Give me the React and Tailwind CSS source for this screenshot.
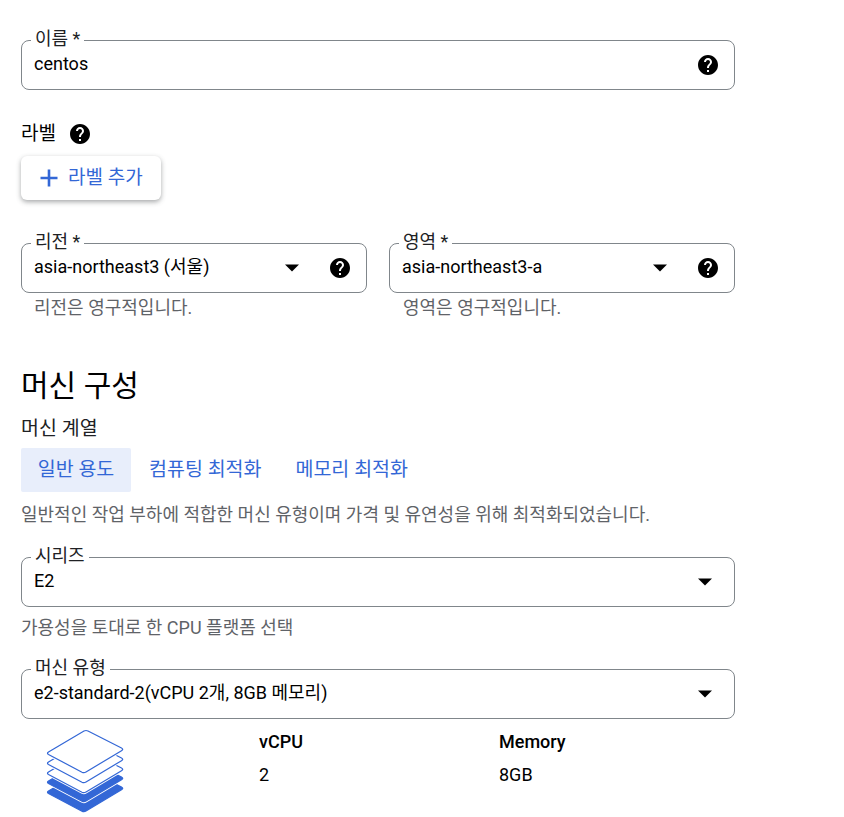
function HelpIcon({ className = '' }) {
  return (
    <svg viewBox="0 0 24 24" className={`w-6 h-6 shrink-0 fill-black ${className}`}>
      <path d="M12 2C6.48 2 2 6.48 2 12s4.48 10 10 10 10-4.48 10-10S17.52 2 12 2zm1 17h-2v-2h2v2zm2.07-7.75l-.9.92C13.45 12.9 13 13.5 13 15h-2v-.5c0-1.1.45-2.1 1.17-2.83l1.24-1.26c.37-.36.59-.86.59-1.41 0-1.1-.9-2-2-2s-2 .9-2 2H8c0-2.21 1.79-4 4-4s4 1.79 4 4c0 .88-.36 1.68-.93 2.25z" />
    </svg>
  )
}

function Caret() {
  return (
    <svg viewBox="0 0 24 24" className="w-6 h-6 shrink-0 fill-black">
      <path d="M5 8.5l7 7 7-7z" />
    </svg>
  )
}

function Field({ label, value, select, help, className = '' }) {
  return (
    <div className={`relative h-[50px] rounded-[8px] border border-[#80868b] flex items-center pl-3 ${help ? 'pr-[14px]' : 'pr-[17px]'} ${className}`}>
      <span className="absolute -top-[14px] left-[9px] bg-white px-1 text-[18px] leading-[24px] text-[#202124]">{label}</span>
      <span className="flex-1 text-[18px] leading-[24px] text-black -mt-[2px]">{value}</span>
      {select && <Caret />}
      {help && <HelpIcon className={select ? 'ml-[24px]' : ''} />}
    </div>
  )
}

const layerPath = 'M38 2 Q40 1 42 2 L75.5 19 Q78 20.3 75.5 21.7 L40 43 Q38 44.2 36 43.2 L2.5 25.5 Q0.5 24.3 2.5 23 Z'

function Layers() {
  const layers = [
    { y: 39, filled: true },
    { y: 29, filled: true },
    { y: 20 },
    { y: 10 },
    { y: 0 },
  ]
  return (
    <svg viewBox="0 0 85 85" className="w-[85px] h-[85px] ml-[25px] mt-[10px] shrink-0">
      {layers.map(({ y, filled }) => (
        <g key={y} transform={`translate(0 ${y})`}>
          <path d={layerPath} fill="#fff" stroke="#fff" strokeWidth="3" />
          <path d={layerPath} fill={filled ? '#3367d6' : '#fff'} stroke="#3367d6" strokeWidth="1.2" />
        </g>
      ))}
    </svg>
  )
}

export default function App() {
  return (
    <div
      className="w-[844px] h-[817px] overflow-hidden bg-white pl-[21px] pt-[40px]"
      style={{ fontFamily: 'Roboto, "Noto Sans CJK KR", sans-serif' }}
    >
      <div className="w-[714px]">
        <Field label="이름 *" value="centos" help />

        <div className="mt-[32px] flex items-center gap-[12px] h-[24px] text-[19px] text-black">
          <span>라벨</span>
          <HelpIcon />
        </div>

        <button className="mt-[10px] w-[140px] h-[44px] flex items-center pl-[16px] gap-[7px] rounded-[6px] bg-white shadow-[0_2px_5px_rgba(60,64,67,0.45)] text-[#3367d6] text-[19px]">
          <svg viewBox="0 0 24 24" className="w-6 h-6 fill-[#3367d6]">
            <path d="M20.5 13.3h-7.2v7.2h-2.6v-7.2H3.500v-2.600h7.200V3.500h2.600v7.200h7.200z" />
          </svg>
          라벨 추가
        </button>

        <div className="mt-[43px] grid grid-cols-2 gap-[22px]">
          <div>
            <Field label="리전 *" value="asia-northeast3 (서울)" select help />
            <p className="mt-[5px] pl-[13px] text-[18px] leading-[20px] text-[#5f6368]">리전은 영구적입니다.</p>
          </div>
          <div>
            <Field label="영역 *" value="asia-northeast3-a" select help />
            <p className="mt-[5px] pl-[14px] text-[18px] leading-[20px] text-[#5f6368]">영역은 영구적입니다.</p>
          </div>
        </div>

        <h2 className="mt-[50px] text-[30px] leading-[36px] font-normal text-black">머신 구성</h2>
        <p className="mt-[13px] text-[19.5px] leading-[24px] text-[#202124]">머신 계열</p>

        <div className="mt-[7px] flex text-[#3367d6] text-[19.500px] leading-[44px]">
          <span className="w-[110px] h-[44px] text-center rounded-[2px] bg-[#e8eefb]">일반 용도</span>
          <span className="pl-[18px] pr-[17px]">컴퓨팅 최적화</span>
          <span className="pl-[17px]">메모리 최적화</span>
        </div>

        <p className="mt-[13px] text-[18px] leading-[20px] text-[#5f6368]">일반적인 작업 부하에 적합한 머신 유형이며 가격 및 유연성을 위해 최적화되었습니다.</p>

        <Field label="시리즈" value="E2" select className="mt-[32px]" />
        <p className="mt-[11px] text-[18px] leading-[20px] text-[#5f6368]">가용성을 토대로 한 CPU 플랫폼 선택</p>

        <Field label="머신 유형" value="e2-standard-2(vCPU 2개, 8GB 메모리)" select className="mt-[31px]" />

        <div className="flex">
          <Layers />
          <div className="ml-[128px] w-[240px] mt-[11px] text-[18px] leading-[24px] text-black">
            <p className="font-medium">vCPU</p>
            <p className="mt-[9px]">2</p>
          </div>
          <div className="mt-[11px] text-[18px] leading-[24px] text-black">
            <p className="font-medium">Memory</p>
            <p className="mt-[9px]">8GB</p>
          </div>
        </div>
      </div>
    </div>
  )
}
